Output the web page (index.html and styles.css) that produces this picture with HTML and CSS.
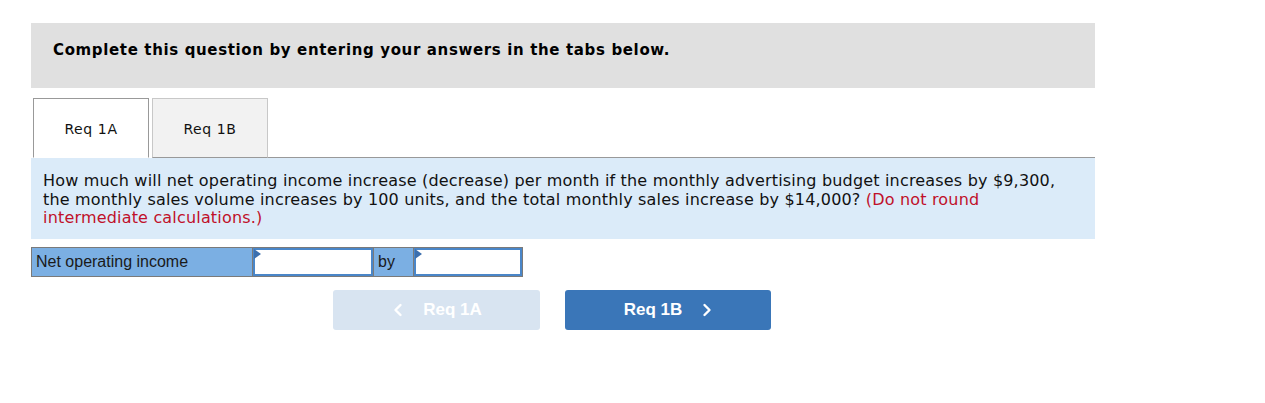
FILE: index.html
```html
<!DOCTYPE html>
<html>
<head>
<meta charset="utf-8">
<link rel="stylesheet" href="styles.css">
</head>
<body>
<div class="page">
  <div class="banner">Complete this question by entering your answers in the tabs below.</div>
  <div class="tabs">
    <div class="tab active">Req 1A</div>
    <div class="tab">Req 1B</div>
    <div class="tab-fill"></div>
  </div>
  <div class="question">How much will net operating income increase (decrease) per month if the monthly advertising budget increases by $9,300, the monthly sales volume increases by 100 units, and the total monthly sales increase by $14,000? <span class="note">(Do not round intermediate calculations.)</span></div>
  <div class="answer-row">
    <div class="label">Net operating income</div>
    <div class="input-cell w1"><div class="input"></div></div>
    <div class="label by">by</div>
    <div class="input-cell w2"><div class="input"></div></div>
  </div>
  <div class="nav">
    <div class="btn prev">
      <svg class="chev" width="10" height="14" viewBox="0 0 10 14"><path d="M7.5 2 L2.5 7 L7.5 12" fill="none" stroke="#fff" stroke-width="2.4" stroke-linecap="round" stroke-linejoin="round"/></svg>
      <span>Req 1A</span>
    </div>
    <div class="btn next">
      <span>Req 1B</span>
      <svg class="chev" width="10" height="14" viewBox="0 0 10 14"><path d="M2.5 2 L7.5 7 L2.5 12" fill="none" stroke="#fff" stroke-width="2.4" stroke-linecap="round" stroke-linejoin="round"/></svg>
    </div>
  </div>
</div>
</body>
</html>
```
FILE: styles.css
```css
html, body {
  margin: 0;
  padding: 0;
  background: #ffffff;
}
.page {
  padding: 23px 0 0 31px;
  width: 1064px;
  font-family: "DejaVu Sans", Verdana, sans-serif;
  color: #111;
}
.banner {
  background: #e0e0e0;
  height: 65px;
  box-sizing: border-box;
  padding: 18px 0 0 22px;
  font-weight: bold;
  font-size: 15px;
  line-height: 18px;
  letter-spacing: 0.64px;
  color: #000;
}
.tabs {
  display: flex;
  margin-top: 10px;
  padding-left: 2px;
  height: 60px;
  box-sizing: border-box;
}
.tab {
  width: 116px;
  height: 60px;
  box-sizing: border-box;
  border: 1px solid #c8c8c8;
  border-bottom: 1px solid #999;
  background: #f2f2f2;
  font-size: 14px;
  letter-spacing: 0.6px;
  display: flex;
  align-items: center;
  justify-content: center;
  padding-top: 2px;
  margin-right: 3px;
  color: #111;
}
.tab.active {
  background: #fff;
  border: 1px solid #999;
  border-bottom: 1px solid #fff;
}
.tab-fill {
  flex: 1;
  margin-left: -3px;
  border-bottom: 1px solid #999;
}
.question {
  background: #dbebf9;
  height: 81px;
  box-sizing: border-box;
  padding: 14px 12px 0 12px;
  font-size: 16px;
  line-height: 18.7px;
  letter-spacing: 0.18px;
  color: #111;
}
.note {
  color: #c0102a;
}
.answer-row {
  display: flex;
  margin-top: 8px;
  width: 492px;
  height: 30px;
  box-sizing: border-box;
  border: 1px solid #7a7a7a;
  background: #7a7a7a;
  gap: 1px;
  font-family: "Liberation Sans", Arial, sans-serif;
}
.label {
  background: #7bafe3;
  width: 220px;
  font-size: 16px;
  line-height: 28px;
  padding-left: 4px;
  box-sizing: border-box;
  color: #1a1a1a;
}
.label.by {
  width: 39px;
}
.input-cell {
  background: #fff;
  position: relative;
}
.w1 { width: 120px; }
.w2 { width: 108px; flex: 1; }
.input {
  height: 100%;
  box-sizing: border-box;
  border: 2px solid #4a86c8;
  background: #fff;
}
.input-cell::before {
  content: "";
  position: absolute;
  left: 1px;
  top: 1px;
  width: 0;
  height: 0;
  border-top: 5px solid transparent;
  border-bottom: 5px solid transparent;
  border-left: 7px solid #3c6fae;
}
.nav {
  display: flex;
  margin-top: 13px;
  margin-left: 302px;
  gap: 25px;
}
.btn {
  width: 207px;
  height: 40px;
  border-radius: 3px;
  display: flex;
  align-items: center;
  justify-content: center;
  gap: 20px;
  color: #fff;
  font-family: "Liberation Sans", Arial, sans-serif;
  font-weight: bold;
  font-size: 17px;
  box-sizing: border-box;
}
.btn.prev {
  background: #d8e4f1;
  padding-left: 2px;
}
.btn.next {
  background: #3a76b8;
  width: 206px;
}
.chev {
  display: block;
}
```
